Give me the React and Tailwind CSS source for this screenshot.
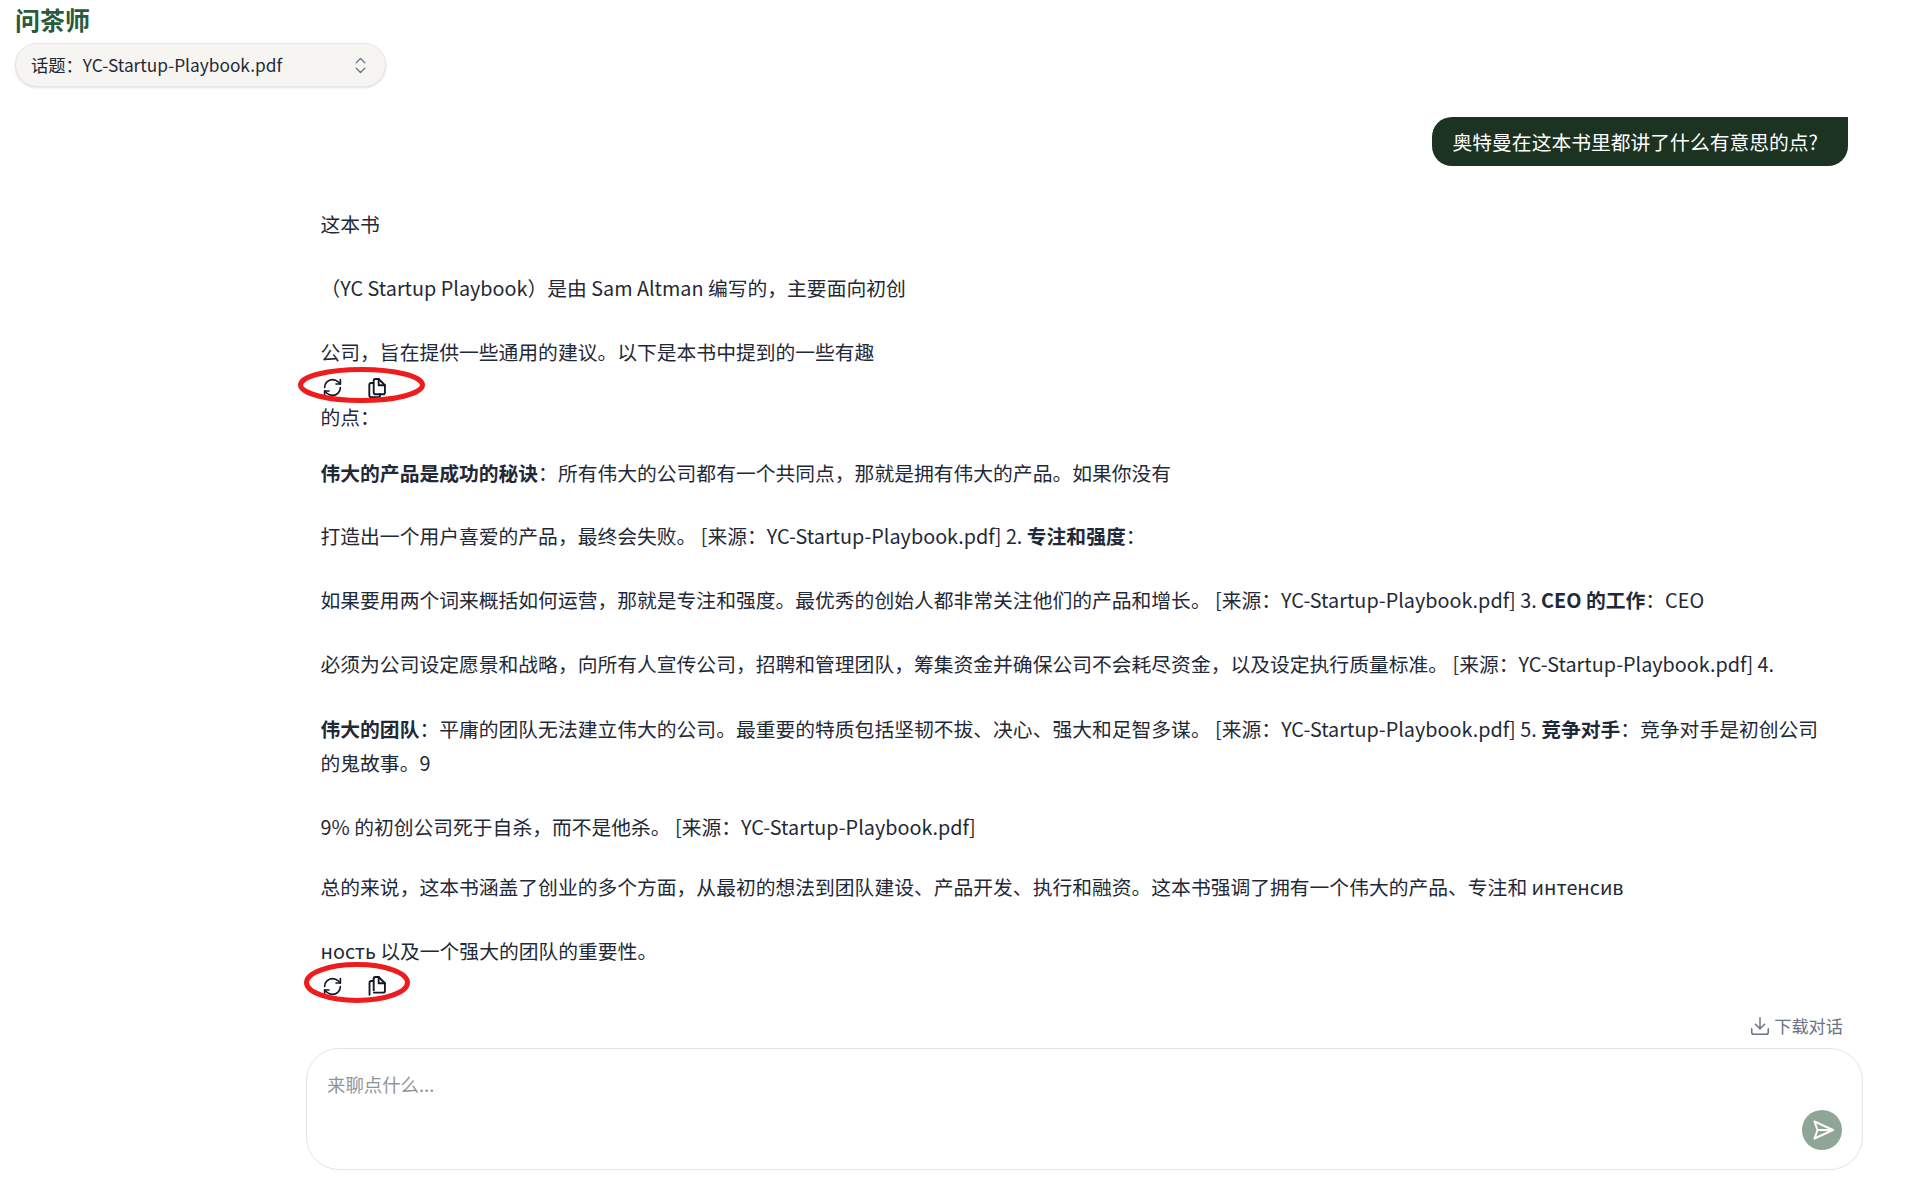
import React from 'react';
import { ChevronsUpDown, RefreshCw, Download } from 'lucide-react';

function CopyIcon({ broken }) {
  return (
    <svg width="22" height="22" viewBox="0 0 20 20" fill="none" stroke="#111827" strokeWidth="1.7" strokeLinejoin="round" strokeLinecap="round">
      {broken ? (
        <>
          <path d="M6.5 5.5H4.8C4 5.5 3.2 6.2 3.2 7V18" />
          <path d="M7 3.2C7 2.4 7.8 1.8 8.6 1.8H11.5L17.2 7.5V14.5C17.2 15.4 16.5 16 15.6 16H7.2" />
          <path d="M11.5 1.8V7.5H17.2" />
          <path d="M7 3.2V14" />
        </>
      ) : (
        <>
          <path d="M6.5 5.5H4.8C3.8 5.5 3 6.3 3 7.3V16.5C3 17.5 3.8 18.3 4.8 18.3H11C12 18.3 12.8 17.5 12.8 16.5V15.5" />
          <path d="M7 3.2C7 2.4 7.8 1.8 8.6 1.8H11.5L17.2 7.5V14C17.2 15 16.4 15.7 15.5 15.7H8.6C7.8 15.7 7 15 7 14Z" />
          <path d="M11.5 1.8V7.5H17.2" />
        </>
      )}
    </svg>
  );
}

function Actions({ width, height, broken, pos, mt }) {
  return (
    <div className={`relative flex h-[24px] items-center gap-[23px] pl-[1.5px] ${mt}`}>
      <RefreshCw size={21} strokeWidth={1.9} className="text-gray-900" />
      <CopyIcon broken={broken} />
      <svg className={`absolute ${pos}`} width={width} height={height} viewBox={`0 0 ${width} ${height}`} fill="none">
        <ellipse cx={width / 2} cy={height / 2} rx={width / 2 - 2.5} ry={height / 2 - 2.5} stroke="#ee1c1c" strokeWidth="5" />
      </svg>
    </div>
  );
}

const Line = ({ mt, children }) => <p className={`${mt} h-[34.65px] whitespace-nowrap leading-[34.65px]`}>{children}</p>;

export default function App() {
  return (
    <div className="h-[1183px] w-[1920px] overflow-hidden bg-white font-['Noto_Sans_CJK_SC','Noto_Sans',sans-serif] text-[#1f2937]">
      <header className="pl-[15px] pt-[3px]">
        <h1 className="text-[25px] font-bold leading-[32px] text-[#2a5a3c]">问茶师</h1>
        <div className="mt-[8px] flex h-[44px] w-[371px] items-center justify-between rounded-full border border-[#e5e7eb] bg-[#f7f5f1] pl-[15px] pr-[14px] text-[17.3px] shadow-sm">
          <span>话题：YC-Startup-Playbook.pdf</span>
          <ChevronsUpDown size={21} strokeWidth={1.6} className="text-gray-500" />
        </div>
      </header>

      <div className="mr-[72px] mt-[30px] flex justify-end">
        <div className="flex h-[49px] w-[416px] items-center rounded-l-[20px] rounded-br-[20px] bg-[#1c3322] pl-[20.5px] text-[19.8px] text-white">
          奥特曼在这本书里都讲了什么有意思的点?
        </div>
      </div>

      <main className="ml-[320.5px] mt-[40.5px] text-[19.8px] text-[#1f2937]">
        <Line mt="mt-0">这本书</Line>
        <Line mt="mt-[29.5px]">（YC Startup Playbook）是由 Sam Altman 编写的，主要面向初创</Line>
        <Line mt="mt-[29.6px]">公司，旨在提供一些通用的建议。以下是本书中提到的一些有趣</Line>
        <Actions width={127} height={36} pos="left-[-23px] top-[-9px]" mt="mt-[6px]" />
        <Line mt="mt-[0.5px]">的点：</Line>
        <Line mt="mt-[21px]"><strong>伟大的产品是成功的秘诀</strong>：所有伟大的公司都有一个共同点，那就是拥有伟大的产品。如果你没有</Line>
        <Line mt="mt-[28.8px]">打造出一个用户喜爱的产品，最终会失败。 [来源：YC-Startup-Playbook.pdf] 2. <strong>专注和强度</strong>：</Line>
        <Line mt="mt-[29.6px]">如果要用两个词来概括如何运营，那就是专注和强度。最优秀的创始人都非常关注他们的产品和增长。 [来源：YC-Startup-Playbook.pdf] 3. <strong>CEO 的工作</strong>：CEO</Line>
        <Line mt="mt-[29.5px]">必须为公司设定愿景和战略，向所有人宣传公司，招聘和管理团队，筹集资金并确保公司不会耗尽资金，以及设定执行质量标准。 [来源：YC-Startup-Playbook.pdf] 4.</Line>
        <Line mt="mt-[29.8px]"><strong>伟大的团队</strong>：平庸的团队无法建立伟大的公司。最重要的特质包括坚韧不拔、决心、强大和足智多谋。 [来源：YC-Startup-Playbook.pdf] 5. <strong>竞争对手</strong>：竞争对手是初创公司</Line>
        <Line mt="mt-[-0.6px]">的鬼故事。9</Line>
        <Line mt="mt-[29.2px]">9% 的初创公司死于自杀，而不是他杀。 [来源：YC-Startup-Playbook.pdf]</Line>
        <Line mt="mt-[25.2px]">总的来说，这本书涵盖了创业的多个方面，从最初的想法到团队建设、产品开发、执行和融资。这本书强调了拥有一个伟大的产品、专注和 интенсив</Line>
        <Line mt="mt-[29.8px]">ность 以及一个强大的团队的重要性。</Line>
        <Actions width={106} height={41} broken pos="left-[-17px] top-[-12px]" mt="mt-[5.5px]" />
      </main>

      <div className="ml-[306px] mt-[15px] w-[1557px]">
        <div className="mr-[20px] flex items-center justify-end gap-[3px] text-[17.2px] leading-[26px] text-[#6b7280]">
          <Download size={22} strokeWidth={1.6} />
          <span>下载对话</span>
        </div>
        <div className="mt-[9px] flex h-[122px] justify-between rounded-[33px] border border-[#e2e5e5] bg-white pl-[20px] pr-[20px]">
          <span className="pt-[22px] text-[18.4px] leading-[27px] text-[#8f949b]">来聊点什么...</span>
          <div className="mt-[61px] flex h-[40px] w-[40px] items-center justify-center rounded-full bg-[#8fa595] pl-[1px]">
            <svg width="24" height="24" viewBox="0 0 24 24" fill="none" stroke="white" strokeWidth="2" strokeLinejoin="round" strokeLinecap="round">
              <path d="M3.5 3.5L22 12L3.5 20.5L6.5 12Z" />
              <path d="M6.5 12H22" />
            </svg>
          </div>
        </div>
      </div>
    </div>
  );
}
